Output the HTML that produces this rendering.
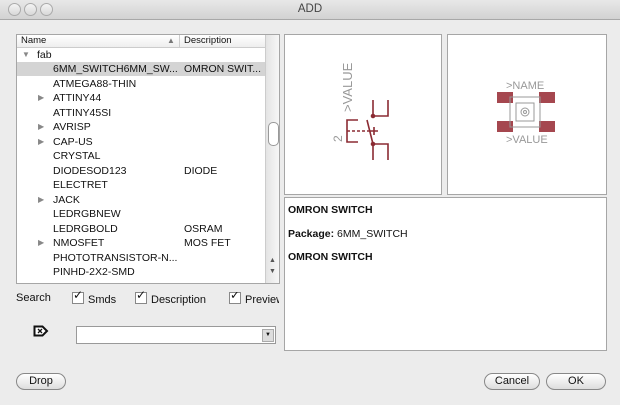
<!DOCTYPE html><html><head><style>
body{margin:0;width:620px;height:405px;background:#ececec;font-family:"Liberation Sans",sans-serif;font-size:10.5px;color:#111;position:relative;overflow:hidden}
.a{position:absolute}
.tb{left:0;top:0;width:620px;height:19px;background:linear-gradient(#e8e8e8,#d2d2d2);border-bottom:1px solid #a8a8a8;text-align:center;line-height:19px;font-size:11.5px;color:#444}
.dot{width:11px;height:11px;border-radius:50%;border:1px solid #aaa;background:linear-gradient(#f4f4f4,#d8d8d8);top:3px}
.box{background:#fff;border:1px solid #a6a6a6}
.row{position:absolute;left:0;width:248px;height:14px;line-height:14px}
.row span{position:absolute}
.btn{border:1px solid #888;border-radius:9px;background:linear-gradient(#fff,#ddd);height:15px;line-height:15px;text-align:center;font-size:11px}
.cb{display:inline-block;width:10px;height:10px;border:1px solid #888;background:#fff;vertical-align:-1px;margin-right:4px;position:relative}
.cb:after{content:"✓";position:absolute;left:0;top:-5px;font-size:12px;color:#111}
</style></head><body>
<div class="a tb">ADD</div>
<div class="a dot" style="left:8px"></div><div class="a dot" style="left:24px"></div><div class="a dot" style="left:40px"></div>
<div class="a box" style="left:16px;top:34px;width:262px;height:248px;overflow:hidden">
 <div class="a" style="left:0;top:0;width:248px;height:12px;border-bottom:1px solid #ccc;background:linear-gradient(#fff,#eee);font-size:9.5px;line-height:12px">
  <span class="a" style="left:4px">Name</span><span class="a" style="left:150px;font-size:8px;color:#777">▲</span>
  <span class="a" style="left:162px;top:0;height:12px;border-left:1px solid #ccc"></span><span class="a" style="left:167px">Description</span></div>
 <div class="a" style="left:0;top:13px;width:248px">
  <div class="row" style="top:0"><span style="left:5px;color:#888;font-size:8px">▼</span><span style="left:20px">fab</span></div>
  <div class="row" style="top:14px;background:#d4d4d4"><span style="left:36px">6MM_SWITCH6MM_SW...</span><span style="left:167px">OMRON SWIT...</span></div>
  <div class="row" style="top:28.5px"><span style="left:36px">ATMEGA88-THIN</span></div>
  <div class="row" style="top:43px"><span style="left:21px;color:#888;font-size:8px">▶</span><span style="left:36px">ATTINY44</span></div>
  <div class="row" style="top:57.5px"><span style="left:36px">ATTINY45SI</span></div>
  <div class="row" style="top:72px"><span style="left:21px;color:#888;font-size:8px">▶</span><span style="left:36px">AVRISP</span></div>
  <div class="row" style="top:86.5px"><span style="left:21px;color:#888;font-size:8px">▶</span><span style="left:36px">CAP-US</span></div>
  <div class="row" style="top:101px"><span style="left:36px">CRYSTAL</span></div>
  <div class="row" style="top:115.5px"><span style="left:36px">DIODESOD123</span><span style="left:167px">DIODE</span></div>
  <div class="row" style="top:130px"><span style="left:36px">ELECTRET</span></div>
  <div class="row" style="top:144.5px"><span style="left:21px;color:#888;font-size:8px">▶</span><span style="left:36px">JACK</span></div>
  <div class="row" style="top:159px"><span style="left:36px">LEDRGBNEW</span></div>
  <div class="row" style="top:173.5px"><span style="left:36px">LEDRGBOLD</span><span style="left:167px">OSRAM</span></div>
  <div class="row" style="top:188px"><span style="left:21px;color:#888;font-size:8px">▶</span><span style="left:36px">NMOSFET</span><span style="left:167px">MOS FET</span></div>
  <div class="row" style="top:202.5px"><span style="left:36px">PHOTOTRANSISTOR-N...</span></div>
  <div class="row" style="top:217px"><span style="left:36px">PINHD-2X2-SMD</span></div>
  <div class="row" style="top:231.5px"><span style="left:36px">PINHD-2X2-SMD</span><span style="left:167px">PIN HEADER</span></div>
 </div>
 <div class="a" style="left:248px;top:0;width:14px;height:248px;background:linear-gradient(90deg,#e4e4e4,#f8f8f8);border-left:1px solid #ccc">
  <div class="a" style="left:2px;top:87px;width:9px;height:22px;border:1px solid #999;border-radius:5px;background:#fff"></div>
  <div class="a" style="left:3px;top:222px;font-size:7px;color:#555">▲</div><div class="a" style="left:3px;top:233px;font-size:7px;color:#555">▼</div>
 </div>
</div>
<div class="a" style="left:16px;top:292px;font-size:11px">Search</div>
<div class="a" style="left:72px;top:292px;font-size:11px"><span class="cb"></span>Smds</div>
<div class="a" style="left:135px;top:292px;font-size:11px"><span class="cb"></span>Description</div>
<div class="a" style="left:229px;top:292px;font-size:11px;white-space:nowrap;width:50px;overflow:hidden"><span class="cb"></span>Preview</div>
<svg class="a" style="left:33px;top:325px" width="16" height="12"><path d="M1.5 1.5H9.5L14 6L9.5 10.5H1.5Z" fill="#fff" stroke="#111" stroke-width="2"/><path d="M5 4L9 8M9 4L5 8" stroke="#111" stroke-width="1.3"/></svg>
<div class="a box" style="left:76px;top:326px;width:198px;height:16px;border-color:#999"><div class="a" style="right:1px;top:2px;width:10px;height:11px;background:#ddd;border:1px solid #aaa;font-size:6px;text-align:center;line-height:11px">▼</div></div>
<div class="a box" style="left:284px;top:34px;width:156px;height:159px"></div>
<div class="a box" style="left:447px;top:34px;width:158px;height:159px"></div>
<svg class="a" style="left:284px;top:34px" width="322" height="160">
 <g fill="#999" font-family="Liberation Sans">
  <text transform="translate(68,78) rotate(-90)" font-size="13">&gt;VALUE</text>
  <text transform="translate(58,108) rotate(-90)" font-size="12">2</text>
  <text x="222" y="55" font-size="11">&gt;NAME</text><text x="222" y="109" font-size="11">&gt;VALUE</text>
 </g>
 <g stroke="#8b2b33" stroke-width="1.6" fill="none">
  <path d="M89 66V82H104V66 M89 126V110H104V126 M74 86H63V108H74 M83 86L89 110 M86 97H94 M90 93V101"/>
  <path d="M63 97H88" stroke-dasharray="3 2"/>
  <circle cx="89" cy="82" r="1.5" fill="#8b2b33"/><circle cx="89" cy="110" r="1.5" fill="#8b2b33"/>
 </g>
 <g fill="#a5474f"><rect x="213" y="58" width="16" height="11"/><rect x="255" y="58" width="16" height="11"/><rect x="213" y="87" width="16" height="11"/><rect x="255" y="87" width="16" height="11"/></g>
 <g stroke="#999" fill="none"><rect x="226" y="63" width="30" height="30"/><rect x="232" y="69" width="18" height="18"/><circle cx="241" cy="78" r="4"/><circle cx="241" cy="78" r="1.5"/></g>
</svg>
<div class="a box" style="left:284px;top:197px;width:321px;height:152px;font-size:10.5px">
 <div class="a" style="left:3px;top:6px;font-weight:bold">OMRON SWITCH</div>
 <div class="a" style="left:3px;top:30px"><b>Package:</b> 6MM_SWITCH</div>
 <div class="a" style="left:3px;top:53px;font-weight:bold">OMRON SWITCH</div>
</div>
<div class="a btn" style="left:16px;top:373px;width:48px">Drop</div>
<div class="a btn" style="left:484px;top:373px;width:54px">Cancel</div>
<div class="a btn" style="left:546px;top:373px;width:58px">OK</div>
</body></html>
